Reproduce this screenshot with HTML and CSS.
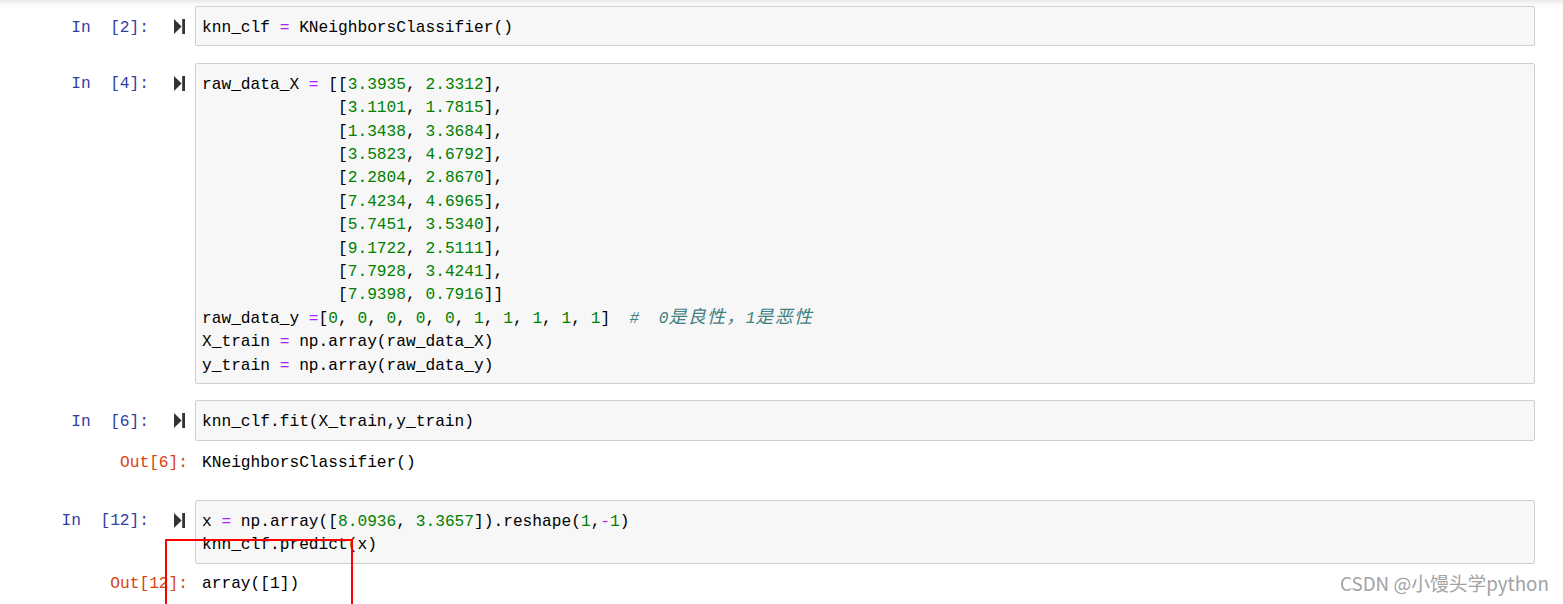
FILE: index.html
```html
<!DOCTYPE html>
<html>
<head>
<meta charset="utf-8">
<link rel="stylesheet" href="styles.css">
</head>
<body>
<div class="notebook">
  <div class="cell">
    <div class="input">
      <div class="prompt in">In&nbsp;&nbsp;[2]:</div>
      <div class="run"><svg width="11" height="15" viewBox="0 0 11 15"><polygon points="0,0 7.6,7.5 0,15" fill="#333"/><rect x="8.2" y="0" width="2.8" height="15" fill="#333"/></svg></div>
      <div class="area"><div class="ln">knn_clf <span class="op">=</span> KNeighborsClassifier()</div></div>
    </div>
  </div>

  <div class="cell">
    <div class="input">
      <div class="prompt in">In&nbsp;&nbsp;[4]:</div>
      <div class="run"><svg width="11" height="15" viewBox="0 0 11 15"><polygon points="0,0 7.6,7.5 0,15" fill="#333"/><rect x="8.2" y="0" width="2.8" height="15" fill="#333"/></svg></div>
      <div class="area">
<div class="ln">raw_data_X <span class="op">=</span> [[<span class="num">3.3935</span>, <span class="num">2.3312</span>],</div>
<div class="ln">              [<span class="num">3.1101</span>, <span class="num">1.7815</span>],</div>
<div class="ln">              [<span class="num">1.3438</span>, <span class="num">3.3684</span>],</div>
<div class="ln">              [<span class="num">3.5823</span>, <span class="num">4.6792</span>],</div>
<div class="ln">              [<span class="num">2.2804</span>, <span class="num">2.8670</span>],</div>
<div class="ln">              [<span class="num">7.4234</span>, <span class="num">4.6965</span>],</div>
<div class="ln">              [<span class="num">5.7451</span>, <span class="num">3.5340</span>],</div>
<div class="ln">              [<span class="num">9.1722</span>, <span class="num">2.5111</span>],</div>
<div class="ln">              [<span class="num">7.7928</span>, <span class="num">3.4241</span>],</div>
<div class="ln">              [<span class="num">7.9398</span>, <span class="num">0.7916</span>]]</div>
<div class="ln">raw_data_y <span class="op">=</span>[<span class="num">0</span>, <span class="num">0</span>, <span class="num">0</span>, <span class="num">0</span>, <span class="num">0</span>, <span class="num">1</span>, <span class="num">1</span>, <span class="num">1</span>, <span class="num">1</span>, <span class="num">1</span>]  <span class="cmt">#  0<span class="cjk">是良性，</span>1<span class="cjk">是恶性</span></span></div>
<div class="ln">X_train <span class="op">=</span> np.array(raw_data_X)</div>
<div class="ln">y_train <span class="op">=</span> np.array(raw_data_y)</div>
      </div>
    </div>
  </div>

  <div class="cell">
    <div class="input">
      <div class="prompt in">In&nbsp;&nbsp;[6]:</div>
      <div class="run"><svg width="11" height="15" viewBox="0 0 11 15"><polygon points="0,0 7.6,7.5 0,15" fill="#333"/><rect x="8.2" y="0" width="2.8" height="15" fill="#333"/></svg></div>
      <div class="area"><div class="ln">knn_clf.fit(X_train,y_train)</div></div>
    </div>
    <div class="output">
      <div class="prompt out">Out[6]:</div>
      <div class="result">KNeighborsClassifier()</div>
    </div>
  </div>

  <div class="cell">
    <div class="input">
      <div class="prompt in">In&nbsp;&nbsp;[12]:</div>
      <div class="run"><svg width="11" height="15" viewBox="0 0 11 15"><polygon points="0,0 7.6,7.5 0,15" fill="#333"/><rect x="8.2" y="0" width="2.8" height="15" fill="#333"/></svg></div>
      <div class="area">
<div class="ln">x <span class="op">=</span> np.array([<span class="num">8.0936</span>, <span class="num">3.3657</span>]).reshape(<span class="num">1</span>,<span class="op">-</span><span class="num">1</span>)</div>
<div class="ln">knn_clf.predict(x)</div>
      </div>
    </div>
    <div class="output last">
      <div class="prompt out">Out[12]:</div>
      <div class="result">array([1])</div>
    </div>
  </div>
</div>
<div class="mark"></div>
<div class="watermark">CSDN @小馒头学python</div>
</body>
</html>
```
FILE: styles.css
```css
html, body {
  margin: 0;
  padding: 0;
  width: 1563px;
  height: 604px;
  overflow: hidden;
  background: #fff linear-gradient(#e9e9e9 0, #f6f6f6 3px, #fff 7px) no-repeat;
  position: relative;
}

.notebook {
  padding: 6px 28px 0 0;
  display: flex;
  flex-direction: column;
  gap: 16.5px;
  font-family: "Liberation Mono", "Noto Sans CJK SC", monospace;
  font-size: 16.2px;
  line-height: 23.4px;
  color: #000;
}

.cell {
  display: flex;
  flex-direction: column;
}

.input {
  display: flex;
  align-items: flex-start;
}

.prompt {
  white-space: pre;
  text-align: right;
  flex: none;
}

.prompt.in {
  width: 149px;
  color: #303f9f;
  padding-top: 10.5px;
}

.run {
  width: 11px;
  margin-left: 25px;
  margin-right: 10px;
  padding-top: 13px;
  flex: none;
  display: flex;
}

.area {
  flex: 1;
  background: #f7f7f7;
  border: 1px solid #cfcfcf;
  border-radius: 2px;
  padding: 10px 6px 5px;
}

.ln {
  white-space: pre;
  height: 23.4px;
}

.op { color: #aa22ff; }
.num { color: #008000; }
.cmt { color: #408080; font-style: italic; }
.cjk {
  font-family: "Noto Sans CJK SC", sans-serif;
  font-size: 18px;
  letter-spacing: 1.3px;
  line-height: 0;
}

.output {
  display: flex;
  margin-top: 11px;
  padding-bottom: 8px;
}

.output.last {
  margin-top: 9px;
}

.prompt.out {
  width: 188px;
  color: #d84315;
}

.result {
  white-space: pre;
  padding-left: 14px;
}

.mark {
  position: absolute;
  left: 165px;
  top: 539px;
  width: 184px;
  height: 80px;
  border: 2px solid #ff0000;
  border-bottom: none;
}

.watermark {
  position: absolute;
  left: 1340px;
  top: 570px;
  font-family: "Noto Sans CJK SC", "Noto Sans", sans-serif;
  font-size: 18.8px;
  line-height: 26px;
  color: #a3a3a3;
  text-shadow: 0 0 1px #fff;
  white-space: nowrap;
}
```
